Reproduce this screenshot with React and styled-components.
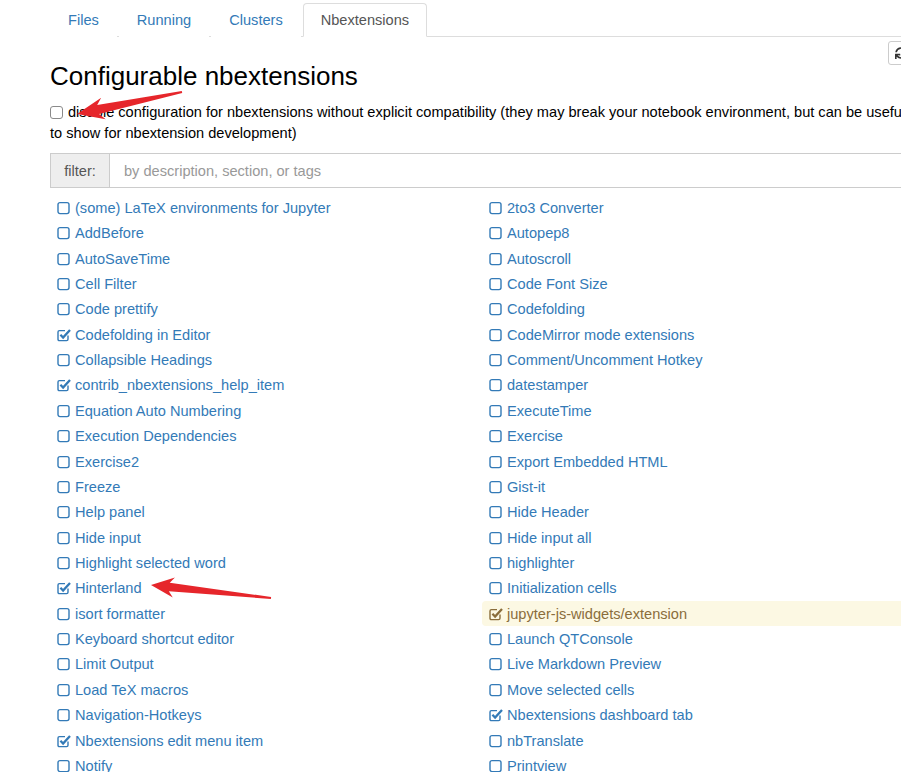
import React from 'react'
import styled, { createGlobalStyle } from 'styled-components'
import { FaSync } from 'react-icons/fa'

const leftItems = [
  ['(some) LaTeX environments for Jupyter'],
  ['AddBefore'],
  ['AutoSaveTime'],
  ['Cell Filter'],
  ['Code prettify'],
  ['Codefolding in Editor', 'on'],
  ['Collapsible Headings'],
  ['contrib_nbextensions_help_item', 'on'],
  ['Equation Auto Numbering'],
  ['Execution Dependencies'],
  ['Exercise2'],
  ['Freeze'],
  ['Help panel'],
  ['Hide input'],
  ['Highlight selected word'],
  ['Hinterland', 'on'],
  ['isort formatter'],
  ['Keyboard shortcut editor'],
  ['Limit Output'],
  ['Load TeX macros'],
  ['Navigation-Hotkeys'],
  ['Nbextensions edit menu item', 'on'],
  ['Notify'],
]

const rightItems = [
  ['2to3 Converter'],
  ['Autopep8'],
  ['Autoscroll'],
  ['Code Font Size'],
  ['Codefolding'],
  ['CodeMirror mode extensions'],
  ['Comment/Uncomment Hotkey'],
  ['datestamper'],
  ['ExecuteTime'],
  ['Exercise'],
  ['Export Embedded HTML'],
  ['Gist-it'],
  ['Hide Header'],
  ['Hide input all'],
  ['highlighter'],
  ['Initialization cells'],
  ['jupyter-js-widgets/extension', 'warn'],
  ['Launch QTConsole'],
  ['Live Markdown Preview'],
  ['Move selected cells'],
  ['Nbextensions dashboard tab', 'on'],
  ['nbTranslate'],
  ['Printview'],
]

const tabs = ['Files', 'Running', 'Clusters', 'Nbextensions']

const GlobalStyle = createGlobalStyle`
  body {
    margin: 0;
    background: #fff;
    overflow: hidden;
    font-family: "Liberation Sans", Arial, sans-serif;
    font-size: 14.6px;
    color: #000;
  }
`

// fa-square-o / fa-check-square-o look-alikes
function BoxIcon({ checked }) {
  return (
    <svg width="14" height="14" viewBox="0 0 14 14">
      {checked ? (
        <>
          <path
            d="M11 7.6 V11.2 Q11 12.6 9.6 12.6 H2.4 Q1 12.6 1 11.2 V4 Q1 2.6 2.4 2.6 H8"
            fill="none"
            stroke="currentColor"
            strokeWidth="1.4"
          />
          <path
            d="M3.4 6.8 L6.1 9.5 L13 2"
            fill="none"
            stroke="currentColor"
            strokeWidth="2.3"
          />
        </>
      ) : (
        <rect x="1" y="1.6" width="11" height="11" rx="2" fill="none" stroke="currentColor" strokeWidth="1.4" />
      )}
    </svg>
  )
}

function arrowPoints(tip, tail, headLen, headHalf) {
  const dx = tail[0] - tip[0]
  const dy = tail[1] - tip[1]
  const len = Math.hypot(dx, dy)
  const ux = dx / len
  const uy = dy / len
  const px = -uy
  const py = ux
  const at = (d, w) => [tip[0] + ux * d + px * w, tip[1] + uy * d + py * w]
  const pts = [
    at(0, 0),
    at(headLen, headHalf),
    at(headLen * 0.8, headHalf * 0.42),
    at(len, 1),
    at(len, -1),
    at(headLen * 0.8, -headHalf * 0.42),
    at(headLen, -headHalf),
  ]
  return pts.map((p) => p.join(',')).join(' ')
}

function Item({ label, state }) {
  return (
    <Row $warn={state === 'warn'}>
      <BoxIcon checked={state === 'on' || state === 'warn'} />
      <span>{label}</span>
    </Row>
  )
}

export default function App() {
  return (
    <>
      <GlobalStyle />
      <Page>
        <Nav>
          {tabs.map((t) => (
            <Tab key={t} $active={t === 'Nbextensions'}>{t}</Tab>
          ))}
        </Nav>
        <HeadRow>
          <Title>Configurable nbextensions</Title>
          <RefreshButton>
            <FaSync size={12} />
          </RefreshButton>
        </HeadRow>
        <Description>
          <PlainCheck type="checkbox" />
          disable configuration for nbextensions without explicit compatibility (they may break your notebook environment, but can be useful to show for nbextension development)
        </Description>
        <FilterGroup>
          <FilterAddon>filter:</FilterAddon>
          <FilterInput placeholder="by description, section, or tags" />
        </FilterGroup>
        <Columns>
          <Column>
            {leftItems.map(([label, state]) => (
              <Item key={label} label={label} state={state} />
            ))}
          </Column>
          <Column>
            {rightItems.map(([label, state]) => (
              <Item key={label} label={label} state={state} />
            ))}
          </Column>
        </Columns>
      </Page>
      <Annotations width="901" height="772" viewBox="0 0 901 772">
        <polygon points={arrowPoints([77, 114], [182, 92], 27, 11)} />
        <polygon points={arrowPoints([151, 585], [271, 598], 23, 10)} />
      </Annotations>
    </>
  )
}

const Page = styled.div`
  width: 864px;
  margin-left: 50px;
`

const Nav = styled.div`
  display: flex;
  padding-top: 3px;
  border-bottom: 1px solid #ddd;
`

const Tab = styled.div`
  height: 32px;
  line-height: 32px;
  padding: 0 17px;
  margin-right: 2px;
  margin-bottom: -1px;
  border: 1px solid ${(p) => (p.$active ? '#ddd' : 'transparent')};
  border-bottom-color: ${(p) => (p.$active ? '#fff' : 'transparent')};
  border-radius: 4px 4px 0 0;
  background: #fff;
  color: ${(p) => (p.$active ? '#555' : '#337ab7')};
`

const HeadRow = styled.div`
  display: flex;
  justify-content: space-between;
  align-items: flex-start;
`

const Title = styled.h3`
  margin: 24.7px 0 0;
  font-size: 26px;
  line-height: 28.6px;
  font-weight: 400;
  color: #000;
`

const RefreshButton = styled.div`
  margin-top: 4px;
  width: 24px;
  height: 22px;
  display: flex;
  align-items: center;
  justify-content: center;
  border: 1px solid #ccc;
  border-radius: 3px;
  color: #333;
`

const Description = styled.p`
  margin: 12px 0 0;
  line-height: 21px;
`

const PlainCheck = styled.input`
  appearance: none;
  width: 13px;
  height: 13px;
  margin: 0 5px 0 0;
  vertical-align: -2px;
  border: 1px solid #8a8a8a;
  border-radius: 3px;
  background: #fff;
`

const FilterGroup = styled.div`
  display: flex;
  height: 35px;
  margin-top: 9px;
`

const FilterAddon = styled.div`
  width: 58px;
  display: flex;
  align-items: center;
  justify-content: center;
  background: #eee;
  border: 1px solid #ccc;
  border-right: none;
  color: #555;
`

const FilterInput = styled.input`
  flex: 1;
  border: 1px solid #ccc;
  padding: 0 14px;
  font-family: inherit;
  font-size: 14.6px;
  outline: none;
  &::placeholder {
    color: #999;
  }
`

const Columns = styled.div`
  display: grid;
  grid-template-columns: 432px 432px;
  margin-top: 7px;
`

const Column = styled.div`
  display: flex;
  flex-direction: column;
`

const Row = styled.div`
  display: flex;
  align-items: center;
  gap: 4px;
  height: 25.36px;
  padding-left: 7px;
  border-radius: 4px;
  color: ${(p) => (p.$warn ? '#8a6d3b' : '#337ab7')};
  background: ${(p) => (p.$warn ? '#fcf8e3' : 'transparent')};
  white-space: nowrap;

  svg {
    flex: none;
  }
`

const Annotations = styled.svg`
  position: absolute;
  top: 0;
  left: 0;
  pointer-events: none;

  polygon {
    fill: #e6262b;
  }
`
